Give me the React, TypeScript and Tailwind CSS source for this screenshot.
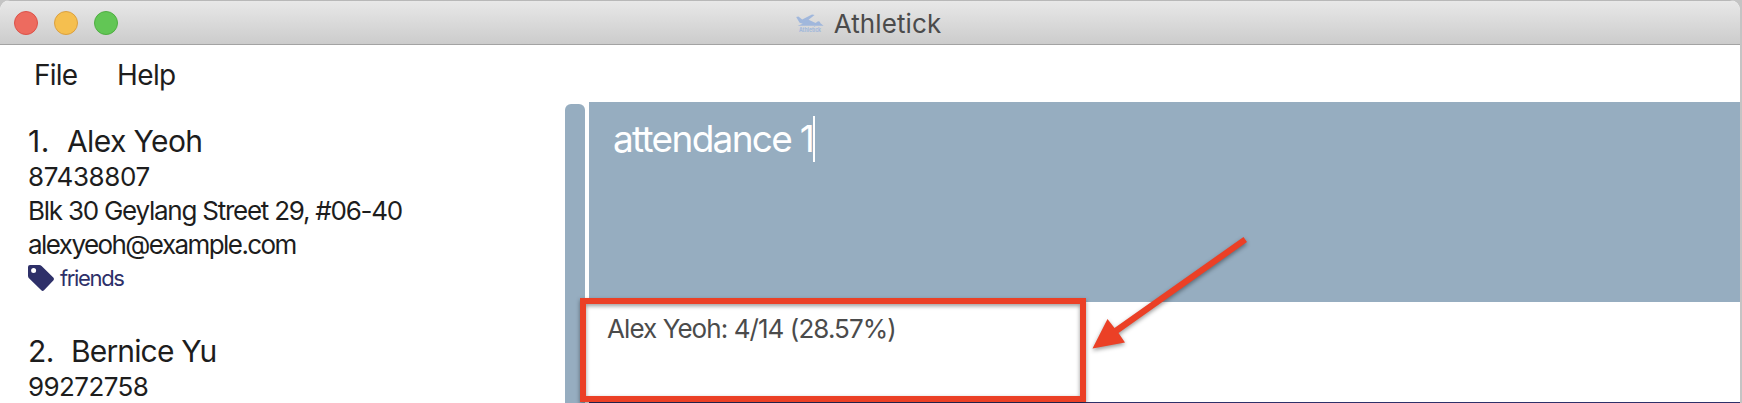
import React from "react";

function TagIcon() {
  return (
    <svg viewBox="0 0 26 26" className="mt-[3px] h-[26px] w-[26px]" fill="#2e3069">
      <path
        fillRule="evenodd"
        d="M2 0H11.2Q12.6 0 13.6 1L25.3 12.6Q26.6 14 25.3 15.4L16 25.3Q14.7 26.5 13.3 25.3L1 13.3Q0 12.3 0 10.8V2Q0 0 2 0ZM5.6 3.1A2.5 2.5 0 1 0 5.6 8.1A2.5 2.5 0 1 0 5.6 3.1Z"
      />
    </svg>
  );
}

function AppLogo() {
  return (
    <svg viewBox="0 0 28 20" className="h-[20px] w-[28px]" fill="#a0b7dc">
      <path d="M0.2 3L2.4 2.4L6.2 5.6L16 0.4L18.6 1L12.6 5.8L19.6 9L21.6 7.4A2.2 2.2 0 0 1 24.4 9.2L27.6 11.8H1.6L6.8 9.8L3.6 8.8Z" />
      <text x="3" y="18.4" fontSize="6" fontWeight="700" fontFamily="Inter, sans-serif" textLength="22" lengthAdjust="spacingAndGlyphs">
        Athletick
      </text>
    </svg>
  );
}

export default function App() {
  return (
    <div className="relative h-[403px] w-[1742px] overflow-hidden bg-[#c4c4c4] font-['Inter',sans-serif] text-[#1d1d1d]">
      <div className="flex h-[403px] w-[1740px] flex-col overflow-hidden rounded-t-[10px] bg-white">
        <header className="relative flex h-[45px] shrink-0 items-center justify-center border-t border-b border-t-[#b8b8b8] border-b-[#a3a3a3] bg-linear-to-b from-[#e8e8e8] to-[#cccccc]">
          <div className="absolute top-[10px] left-[14px] flex gap-4">
            <span className="h-6 w-6 rounded-full border border-[#dc5249] bg-[#ed6b5f]" />
            <span className="h-6 w-6 rounded-full border border-[#dba040] bg-[#f5bf4f]" />
            <span className="h-6 w-6 rounded-full border border-[#4fae42] bg-[#62c655]" />
          </div>
          <div className="flex items-center pt-[2px] pr-[3px]">
            <AppLogo />
            <h1 className="ml-[10px] text-[26px] leading-[44px] tracking-[0.1px] whitespace-nowrap text-[#4b4b4b]">Athletick</h1>
          </div>
        </header>
        <nav className="flex h-[57px] shrink-0 pt-[9px] pl-[34px] text-[28px] leading-[42px]">
          <span className="w-[83px] tracking-[-0.8px]">File</span>
          <span className="tracking-[-0.6px]">Help</span>
        </nav>
        <main className="flex min-h-0 flex-1">
          <aside className="w-[565px] shrink-0 overflow-hidden pt-5 pl-[28px] text-[26px] leading-[34px] whitespace-nowrap">
            <section className="h-[210px]">
              <h2 className="flex text-[30px] leading-[38px]">
                <span className="w-[39px] tracking-[0.6px]">1.</span>
                <span className="tracking-[-0.6px]">Alex Yeoh</span>
              </h2>
              <p className="tracking-[-0.4px]">87438807</p>
              <p className="tracking-[-1.25px]">Blk 30 Geylang Street 29, #06-40</p>
              <p className="tracking-[-1.57px]">alexyeoh@example.com</p>
              <div className="flex items-start gap-[6px]">
                <TagIcon />
                <span className="text-[22px] leading-[32px] tracking-[-1.35px] text-[#2e3069]">friends</span>
              </div>
            </section>
            <section>
              <h2 className="flex text-[30px] leading-[38px]">
                <span className="w-[43px] tracking-[-0.6px]">2.</span>
                <span className="tracking-[-0.85px]">Bernice Yu</span>
              </h2>
              <p className="tracking-[-0.6px]">99272758</p>
            </section>
          </aside>
          <div className="mt-[2px] mr-1 w-5 shrink-0 rounded-t-[6px] bg-[#96adc0]" />
          <div className="flex min-w-0 flex-1 flex-col">
            <div className="flex h-[200px] shrink-0 items-start bg-[#96adc0] pt-[14px] pl-[24px] text-white">
              <span className="text-[37px] leading-[46px] tracking-[-1.7px] whitespace-nowrap">attendance 1</span>
              <span className="h-[46px] w-[2px] bg-white" />
            </div>
            <div className="h-[100px] shrink-0 pt-[8px] pl-[18px] text-[26px] leading-[38px] tracking-[-0.93px] text-[#4b4b4b]">
              Alex Yeoh: 4/14 (28.57%)
            </div>
            <div className="h-px shrink-0 bg-[#2e3069]" />
          </div>
        </main>
      </div>
      <div className="absolute top-[298px] left-[580px] h-[104px] w-[506px] border-[6px] border-[#eb4026] drop-shadow-[0_2px_2px_rgba(0,0,0,0.4)]" />
      <svg className="absolute top-[220px] left-[1080px] h-[140px] w-[180px] drop-shadow-[0_2px_2px_rgba(0,0,0,0.4)]" viewBox="0 0 180 140" fill="#eb4026">
        <path d="M163.5 17L167 22L38.5 113L45 122.5L12.5 128.5L27.5 99L34.5 108Z" />
      </svg>
    </div>
  );
}
